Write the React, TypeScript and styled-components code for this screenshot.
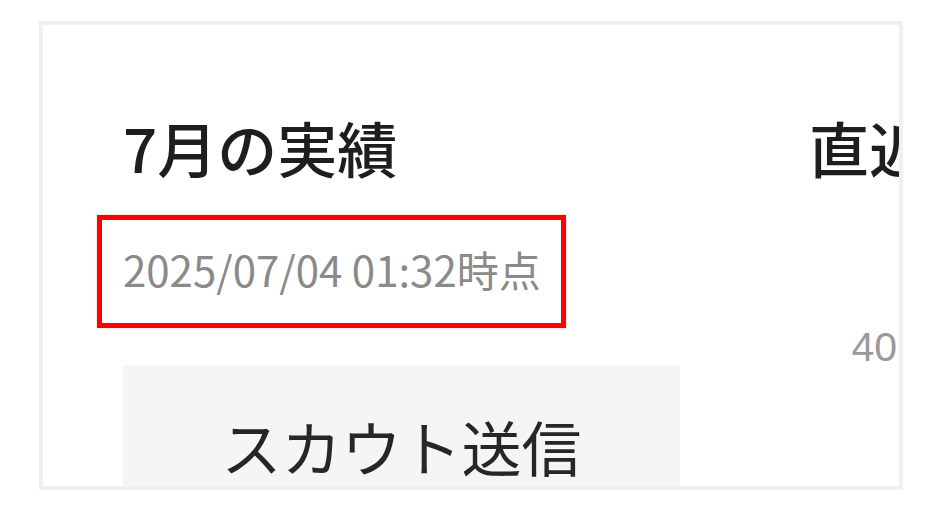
import React from "react";
import styled, { createGlobalStyle } from "styled-components";

const GlobalStyle = createGlobalStyle`
  html, body {
    margin: 0;
    padding: 0;
    background: #ffffff;
    font-family: "Noto Sans CJK JP", "Noto Sans", sans-serif;
  }
  #root {
    width: 932px;
    height: 516px;
    overflow: hidden;
  }
`;

const Page = styled.div`
  padding: 21px 0 0 39px;
`;

const Card = styled.section`
  box-sizing: border-box;
  width: 864px;
  height: 469px;
  border: 4px solid #f0f0f0;
  background: #ffffff;
  overflow: hidden;
  display: flex;
  gap: 129px;
  padding: 92px 0 0 80px;
`;

const SummaryColumn = styled.div`
  width: 557px;
  flex-shrink: 0;
  display: flex;
  flex-direction: column;
`;

const TrendColumn = styled.div`
  width: 600px;
  flex-shrink: 0;
  display: flex;
  flex-direction: column;
`;

const Heading = styled.h2`
  margin: 0;
  font-size: 60px;
  line-height: 1;
  font-weight: 500;
  color: #1e1e1e;
  white-space: nowrap;
`;

const Timestamp = styled.span`
  position: relative;
  align-self: flex-start;
  margin-top: 71px;
  font-size: 42px;
  line-height: 1;
  color: #8a8a8a;
  white-space: nowrap;

  /* annotation frame */
  &::after {
    content: "";
    position: absolute;
    top: -33px;
    left: -26px;
    right: -25px;
    bottom: -38px;
    border: 5px solid #ff0000;
    box-shadow: 0 0 1px rgba(255, 0, 0, 0.5);
  }
`;

const MetricTile = styled.div`
  margin-top: 75px;
  height: 200px;
  background: #f5f5f5;
  padding-top: 51px;
  box-sizing: border-box;
  text-align: center;
`;

const MetricLabel = styled.div`
  font-size: 60px;
  line-height: 1;
  color: #262626;
  font-weight: 400;
`;

const Chart = styled.div`
  margin-top: 150px;
  display: flex;
`;

const AxisLabels = styled.div`
  width: 88px;
  display: flex;
  flex-direction: column;
  align-items: flex-end;
`;

const AxisLabel = styled.span`
  font-family: "Liberation Sans", Arial, sans-serif;
  font-size: 41px;
  line-height: 1;
  color: #9a9a9a;
`;

export default function App() {
  return (
    <>
      <GlobalStyle />
      <Page>
        <Card>
          <SummaryColumn>
            <Heading>7月の実績</Heading>
            <Timestamp>2025/07/04 01:32時点</Timestamp>
            <MetricTile>
              <MetricLabel>スカウト送信</MetricLabel>
            </MetricTile>
          </SummaryColumn>
          <TrendColumn>
            <Heading>直近</Heading>
            <Chart>
              <AxisLabels>
                <AxisLabel>40</AxisLabel>
              </AxisLabels>
            </Chart>
          </TrendColumn>
        </Card>
      </Page>
    </>
  );
}
